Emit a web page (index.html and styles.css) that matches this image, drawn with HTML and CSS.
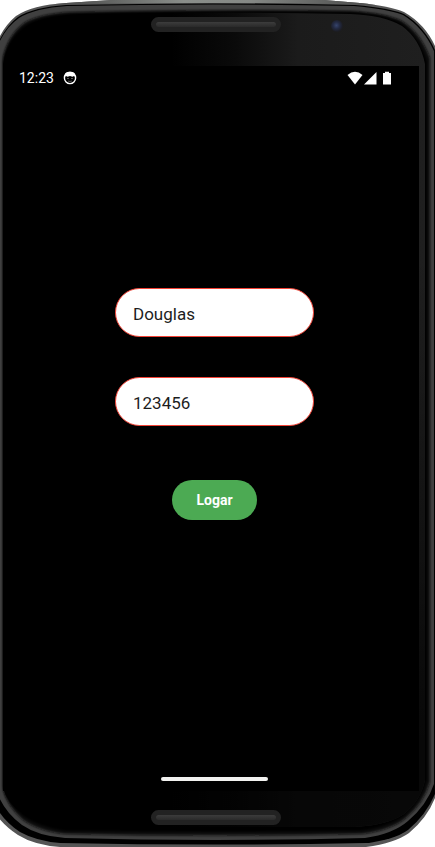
FILE: index.html
```html
<!DOCTYPE html>
<html lang="pt-BR">
<head>
  <meta charset="utf-8">
  <meta name="viewport" content="width=device-width, initial-scale=1">
  <title>Login</title>
  <link rel="stylesheet" href="styles.css">
</head>
<body>
  <div class="phone">
    <svg class="shell" viewBox="0 0 435 847" preserveAspectRatio="none" aria-hidden="true">
      <defs>
        <linearGradient id="glass" x1="0" x2="1" y1="0" y2="0">
          <stop offset="0.4" stop-color="#000"/>
          <stop offset="0.55" stop-color="#0a0a0a"/>
          <stop offset="0.7" stop-color="#1b1b1b"/>
          <stop offset="1" stop-color="#1f1f1f"/>
        </linearGradient>
        <linearGradient id="fade" x1="0" x2="0" y1="0" y2="1">
          <stop offset="0.3" stop-color="#000" stop-opacity="0"/>
          <stop offset="0.9" stop-color="#000" stop-opacity="0.75"/>
        </linearGradient>
        <linearGradient id="topEdge" x1="0" x2="1" y1="0" y2="0">
          <stop offset="0" stop-color="#444"/>
          <stop offset="0.4" stop-color="#8a8e8a"/>
          <stop offset="0.6" stop-color="#858885"/>
          <stop offset="1" stop-color="#444"/>
        </linearGradient>
        <filter id="soft" x="-5%" y="-5%" width="110%" height="110%"><feGaussianBlur stdDeviation="1"/></filter>
        <clipPath id="body"><path d="M-2 40Q5 25 16 16Q32 5 66 3L112 0H324L360 3Q390 6 404 12Q425 24 435 46V798Q427 818 409 833Q395 843 366 847H60Q34 845 18 835Q6 827 -2 817Z"/></clipPath>
      </defs>
      <g clip-path="url(#body)">
        <rect width="435" height="847" fill="#555"/>
        <path d="M50 2Q120 1 215 1T385 3" fill="none" stroke="url(#topEdge)" stroke-width="4"/>
        <path d="M-2 43Q6 26 18 17Q34 7 66 5Q215 2 355 5Q390 8 404 14Q424 26 435 50V794Q426 815 408 830Q394 840 366 843Q215 846 60 843Q36 841 20 832Q6 823 -2 810Z" fill="#000"/>
        <path d="M-2 45Q6 27 19 18Q35 8 67 6Q215 3 354 6Q388 9 403 15Q423 27 434 51V784Q427 805 408 821Q393 834 365 838Q215 842 65 838Q38 836 22 825Q6 813 -1 797Z" fill="#404040"/>
        <path d="M3 57Q8 35 24 23Q38 14 70 12Q215 9 350 11Q386 13 402 21Q421 33 430 58V782Q424 803 406 818Q392 830 362 834Q215 837 65 834Q38 831 23 820Q7 806 3 790Z" fill="#101010" filter="url(#soft)"/>
        <path d="M3 62Q7 40 23 27Q38 16 70 14Q215 10 350 12Q385 14 401 23Q419 36 427 61V780Q422 800 405 815Q390 827 360 831Q215 833 65 831Q38 827 23 816Q7 803 3 787Z" fill="#000" filter="url(#soft)"/>
        <path d="M3 64Q7 42 23 29Q38 16 80 14Q215 11 350 14Q384 15 402 26Q420 39 425 64V780Q421 800 404 814Q388 825 355 827H65Q38 825 23 814Q7 803 3 787Z" fill="url(#glass)"/>
        <path d="M3 64Q7 42 23 29Q38 16 80 14Q215 11 350 14Q384 15 402 26Q420 39 425 64V780Q421 800 404 814Q388 825 355 827H65Q38 825 23 814Q7 803 3 787Z" fill="url(#fade)"/>
      </g>
    </svg>
    <div class="bezel bezel-top">
      <span class="speaker"></span>
      <span class="camera"></span>
    </div>
    <div class="screen">
      <header class="status">
        <span class="clock">12:23</span>
        <svg class="face" viewBox="0 0 14 14" aria-hidden="true">
          <circle cx="7" cy="7" r="5.600" fill="none" stroke="#fff" stroke-width="1.400"/>
          <path d="M1.500 6C1 2 4 .8 7 .8S13 2 12.500 6L11 5 9.500 5.800 7 4.900 4.500 5.800 3 5Z" fill="#fff"/>
          <circle cx="5" cy="7.500" r=".6" fill="#bbb"/><circle cx="9" cy="7.500" r=".6" fill="#bbb"/>
          <path d="M5 10Q7 11 9 10" fill="none" stroke="#888" stroke-width=".6"/>
        </svg>
        <svg class="signals" viewBox="0 0 46 14" aria-hidden="true">
          <path d="M.5 4Q8 -2.500 15.500 4L8 13.500Z" fill="#fff"/>
          <path d="M17 13.500L29.500 1V13.500Z" fill="#fff"/>
          <path d="M36 2H38V.8H42V2H44V13.500H36Z" fill="#fff"/>
        </svg>
      </header>
      <form class="login">
        <input class="field" type="text" value="Douglas" aria-label="Nome">
        <input class="field" type="text" value="123456" aria-label="Senha">
        <button class="submit" type="button">Logar</button>
      </form>
      <div class="home-bar"></div>
    </div>
    <div class="bezel bezel-bottom">
      <span class="speaker"></span>
    </div>
  </div>
</body>
</html>
```
FILE: styles.css
```css
* {
  box-sizing: border-box;
}

body {
  margin: 0;
  background: #fff;
  font-family: Roboto, "Liberation Sans", sans-serif;
}

.phone {
  position: relative;
  display: grid;
  grid-template-rows: auto 1fr auto;
  min-height: 100vh;
}

.shell {
  position: absolute;
  inset: 0;
  width: 100%;
  height: 100%;
}

.bezel {
  position: relative;
  display: flex;
  justify-content: center;
  padding-right: 4px;
}

.bezel-top {
  height: 66px;
  padding-top: 17px;
}

.bezel-bottom {
  height: 56px;
  padding-top: 19px;
}

.speaker {
  width: 130px;
  height: 15px;
  border: 5px solid #222;
  border-radius: 8px;
  background: linear-gradient(#3c3c3c, #2a2a2a);
}

.camera {
  position: absolute;
  top: 20px;
  left: 76%;
  width: 12px;
  height: 12px;
  border-radius: 50%;
  background: radial-gradient(circle at 45% 45%, #36446c 0, #232a43 35%, #1c1d24 65%, #1a1a1a 100%);
}

.screen {
  position: relative;
  display: flex;
  flex-direction: column;
  margin: 0 16px 0 3px;
  background: #000;
}

.status {
  display: flex;
  align-items: center;
  height: 24px;
  padding: 0 26px 0 16px;
  color: #fff;
  font-size: 14px;
}

.face {
  width: 14px;
  height: 14px;
  margin-left: 9px;
}

.signals {
  width: 46px;
  height: 14px;
  margin-left: auto;
}

.login {
  flex: 1;
  display: flex;
  flex-direction: column;
  align-items: center;
  justify-content: center;
  gap: 40px;
  padding: 0 0 59px 7px;
}

.field {
  width: 199px;
  height: 49px;
  padding: 2px 17px 0;
  border: 1px solid #f44336;
  border-radius: 25px;
  background: #fff;
  color: #1d1d1d;
  font: 400 17px Roboto, "Liberation Sans", sans-serif;
}

.submit {
  height: 40px;
  margin-top: 14px;
  padding: 0 24px;
  border: 0;
  border-radius: 20px;
  background: #4caa53;
  color: #fff;
  font: 700 14px Roboto, "Liberation Sans", sans-serif;
}

.home-bar {
  align-self: center;
  width: 107px;
  height: 4px;
  margin-bottom: 10px;
  margin-left: 6px;
  border-radius: 2px;
  background: #f2f2f0;
}
```
